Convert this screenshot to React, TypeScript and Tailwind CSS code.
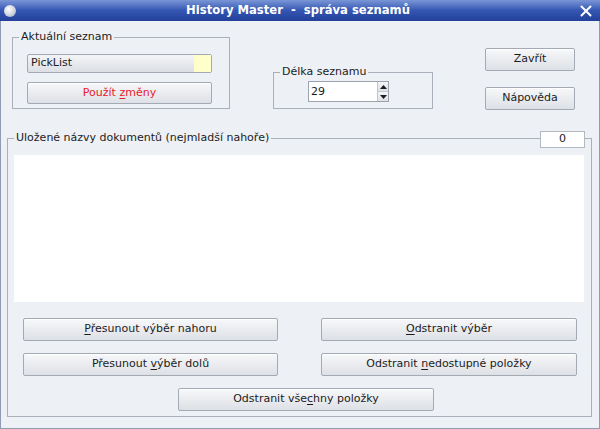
import type { ReactNode } from "react";

function Btn({
  children,
  className = "",
}: {
  children: ReactNode;
  className?: string;
}) {
  return (
    <button
      type="button"
      className={`flex h-[23px] items-center justify-center rounded-[2px] border border-[#a3aab4] bg-gradient-to-b from-[#f7f8fa] to-[#dde0e5] text-[11px] text-[#1c1c1c] shadow-[inset_0_1px_0_#ffffff] ${className}`}
    >
      <span className="whitespace-pre">{children}</span>
    </button>
  );
}

function Group({
  title,
  className = "",
  children,
}: {
  title: string;
  className?: string;
  children: ReactNode;
}) {
  return (
    <fieldset className={`border border-[#aab0b9] ${className}`}>
      <legend className="ml-[6px] px-[2px] text-[11px] leading-[14px] text-[#1c1c1c]">
        {title}
      </legend>
      {children}
    </fieldset>
  );
}

export default function App() {
  return (
    <div className="flex h-[429px] w-[600px] flex-col bg-[#edf0f5] font-['DejaVu_Sans',sans-serif] text-[11px] text-[#1c1c1c]">
      {/* title bar */}
      <div className="flex h-[21px] items-center bg-gradient-to-b from-[#7b96d6] via-[#3556b2] to-[#23409a] px-[4px]">
        <div className="h-[12px] w-[12px] rounded-full bg-[radial-gradient(circle_at_40%_35%,#ffffff,#c9cfdb_60%,#7d879b)]" />
        <div className="flex-1 whitespace-pre text-center text-[11.6px] font-bold text-white">
          History Master  -  správa seznamů
        </div>
        <svg width="12" height="12" viewBox="0 0 12 12" className="mr-[4px]">
          <path
            d="M1.5 1.5 L10.5 10.5 M10.5 1.5 L1.5 10.5"
            stroke="#ffffff"
            strokeWidth="2"
            strokeLinecap="round"
          />
        </svg>
      </div>

      <div className="flex flex-1 flex-col border-x border-b border-[#8f9bb2] border-t-[#ffffff]">
        <div className="flex items-start pt-[9px]">
          <Group title="Aktuální seznam" className="ml-[11px] w-[218px]">
            <div className="px-[14px] pt-[10px] pb-[4px]">
              <div className="flex h-[19px] w-[185px] items-center rounded-[2px] border border-[#a3aab4] bg-gradient-to-b from-[#f4f5f7] to-[#dcdfe4] pl-[3px]">
                <span className="flex-1">PickList</span>
                <span className="h-[17px] w-[17px] bg-[#ffffcc]" />
              </div>
              <Btn className="mt-[9px] w-[185px] !h-[22px] !text-[#e8202a]">
                Použít <u className="underline-offset-2">z</u>měny
              </Btn>
            </div>
          </Group>

          <Group title="Délka seznamu" className="ml-[43px] mt-[35px] w-[160px]">
            <div className="pl-[34px] pt-[2px] pb-[6px]">
              <div className="flex h-[21px] w-[81px] border border-[#9ca3ad] bg-white">
                <span className="flex-1 pl-[2px] leading-[19px]">29</span>
                <div className="flex w-[11px] flex-col border-l border-[#c2c7ce]">
                  <div className="flex flex-1 items-center justify-center bg-gradient-to-b from-[#f5f6f8] to-[#dde0e5]">
                    <svg width="7" height="4" viewBox="0 0 7 4">
                      <path d="M0 4 L3.5 0 L7 4 Z" fill="#1c1c1c" />
                    </svg>
                  </div>
                  <div className="flex flex-1 items-center justify-center border-t border-[#c2c7ce] bg-gradient-to-b from-[#f5f6f8] to-[#dde0e5]">
                    <svg width="7" height="4" viewBox="0 0 7 4">
                      <path d="M0 0 L7 0 L3.5 4 Z" fill="#1c1c1c" />
                    </svg>
                  </div>
                </div>
              </div>
            </div>
          </Group>

          <div className="ml-[52px] mt-[18px] flex flex-col gap-[16px]">
            <Btn className="w-[90px]">Zavřít</Btn>
            <Btn className="w-[90px]">Nápověda</Btn>
          </div>
        </div>

        <div className="relative ml-[6px] mt-[21px] w-[585px]">
          <Group title="Uložené názvy dokumentů (nejmladší nahoře)" className="w-[585px]">
            <div className="px-[6px] pt-[10px] pb-[5px]">
              <div className="h-[147px] w-[570px] bg-white" />
              <div className="mt-[16px] flex gap-[43px] pl-[9px]">
                <Btn className="w-[255px]">
                  <u className="underline-offset-2">P</u>řesunout výběr nahoru
                </Btn>
                <Btn className="w-[256px]">
                  <u className="underline-offset-2">O</u>dstranit výběr
                </Btn>
              </div>
              <div className="mt-[12px] flex gap-[43px] pl-[9px]">
                <Btn className="w-[255px]">
                  Přesunout <u className="underline-offset-2">v</u>ýběr dolů
                </Btn>
                <Btn className="w-[256px]">
                  Odstranit <u className="underline-offset-2">n</u>edostupné položky
                </Btn>
              </div>
              <div className="mt-[12px] pl-[164px]">
                <Btn className="w-[256px]">
                  Odstranit vše<u className="underline-offset-2">c</u>hny položky
                </Btn>
              </div>
            </div>
          </Group>
          <div className="absolute left-[533px] top-0 flex h-[17px] w-[45px] items-center justify-center border border-[#b3b9c2] bg-white">
            0
          </div>
        </div>
      </div>
    </div>
  );
}
